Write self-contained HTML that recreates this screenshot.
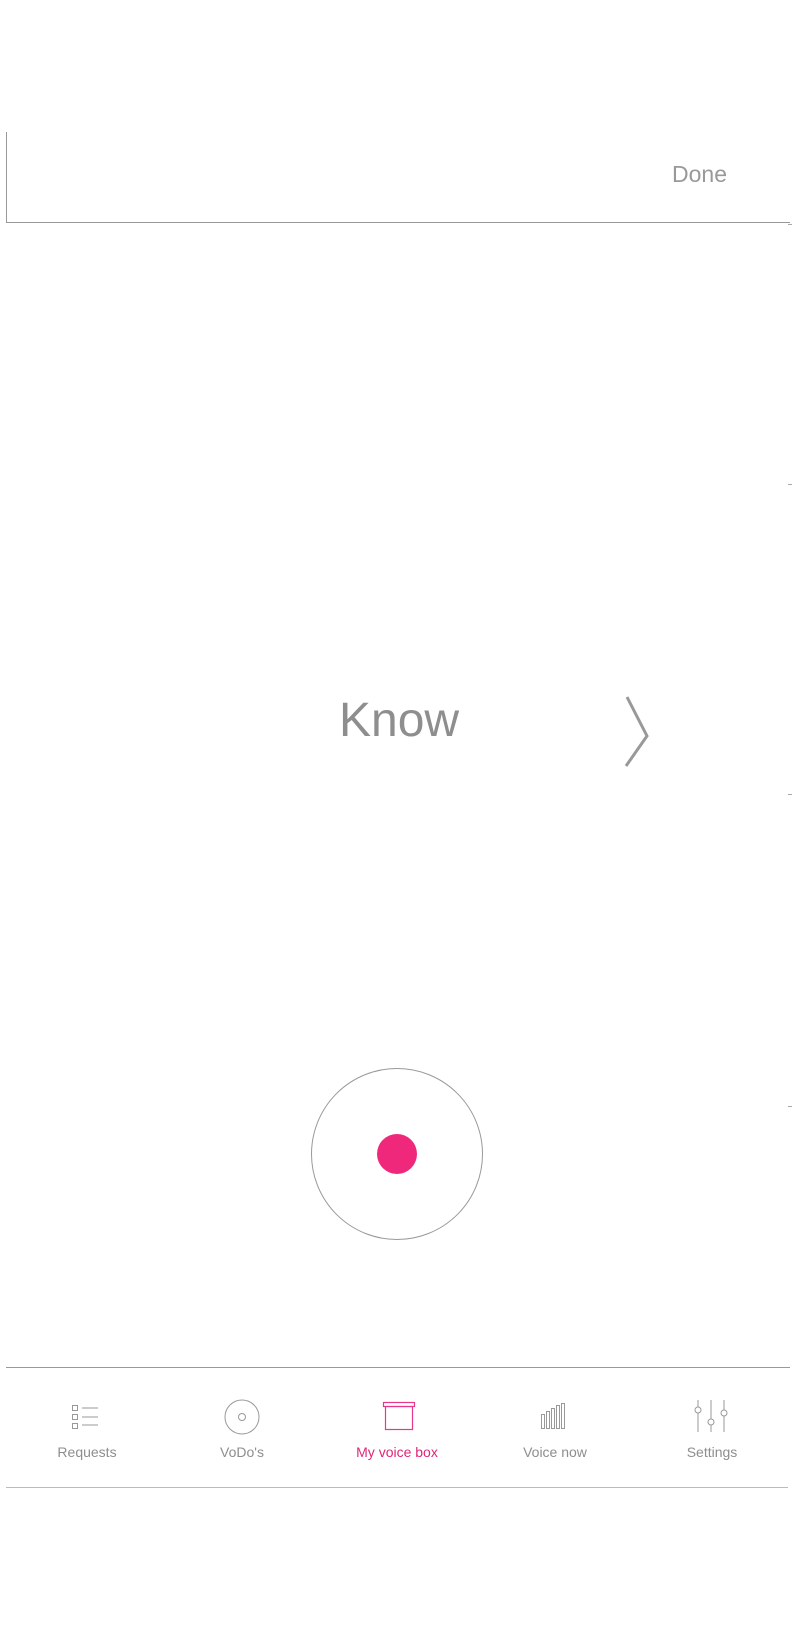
<!DOCTYPE html>
<html><head><meta charset="utf-8"><style>
html,body{margin:0;padding:0;background:#fff;}
body{width:792px;height:1632px;position:relative;overflow:hidden;font-family:"Liberation Sans",sans-serif;}
.a{position:absolute;}
.lbl{position:absolute;top:1444px;font-size:14px;color:#8e8e8e;transform:translateX(-50%);white-space:nowrap;}
</style></head><body>
<div class="a" style="left:6px;top:132px;width:1px;height:91px;background:#999"></div>
<div class="a" style="left:6px;top:222px;width:784px;height:1px;background:#999"></div>
<div class="a" style="left:672px;top:161px;font-size:23px;color:#999">Done</div>
<div class="a" style="left:788px;top:224px;width:4px;height:1px;background:#aaa"></div>
<div class="a" style="left:788px;top:484px;width:4px;height:1px;background:#aaa"></div>
<div class="a" style="left:788px;top:794px;width:4px;height:1px;background:#aaa"></div>
<div class="a" style="left:788px;top:1106px;width:4px;height:1px;background:#aaa"></div>
<div class="a" style="left:339px;top:693px;font-size:48px;color:#8e8e8e">Know</div>
<svg class="a" style="left:0;top:0" width="792" height="1632">
<polyline points="627,697 647,736 626,766" fill="none" stroke="#999" stroke-width="3"/>
<circle cx="397" cy="1154" r="85.5" fill="none" stroke="#999" stroke-width="1"/>
<circle cx="397" cy="1154" r="20" fill="#f0287c"/>
<line x1="6" y1="1367.5" x2="790" y2="1367.5" stroke="#999"/>
<line x1="6" y1="1487.5" x2="788" y2="1487.5" stroke="#bbb"/>
<g fill="none" stroke="#999" stroke-width="1">
<rect x="72.5" y="1405.5" width="5" height="5"/><rect x="72.5" y="1414.5" width="5" height="5"/><rect x="72.5" y="1423.5" width="5" height="5"/>
<line x1="82" y1="1408" x2="98" y2="1408"/><line x1="82" y1="1417" x2="98" y2="1417"/><line x1="82" y1="1425" x2="98" y2="1425"/>
<circle cx="242" cy="1417" r="17"/><circle cx="242" cy="1417" r="3.5"/>
<rect x="541.5" y="1414.5" width="3" height="14"/><rect x="546.5" y="1411.5" width="3" height="17"/><rect x="551.5" y="1408.5" width="3" height="20"/><rect x="556.5" y="1405.5" width="3" height="23"/><rect x="561.5" y="1403.5" width="3" height="25"/>
<line x1="698" y1="1400" x2="698" y2="1432"/><line x1="711" y1="1400" x2="711" y2="1432"/><line x1="724" y1="1400" x2="724" y2="1432"/>
<circle cx="698" cy="1410" r="3" fill="#fff"/><circle cx="711" cy="1422" r="3" fill="#fff"/><circle cx="724" cy="1413" r="3" fill="#fff"/>
</g>
<g fill="none" stroke="#e8388a" stroke-width="1.2">
<rect x="383.5" y="1402.5" width="31" height="4"/>
<rect x="385.5" y="1406.5" width="27" height="23"/>
</g>
</svg>
<div class="lbl" style="left:87px">Requests</div>
<div class="lbl" style="left:242px">VoDo's</div>
<div class="lbl" style="left:397px;color:#e0267a">My voice box</div>
<div class="lbl" style="left:555px">Voice now</div>
<div class="lbl" style="left:712px">Settings</div>
</body></html>
